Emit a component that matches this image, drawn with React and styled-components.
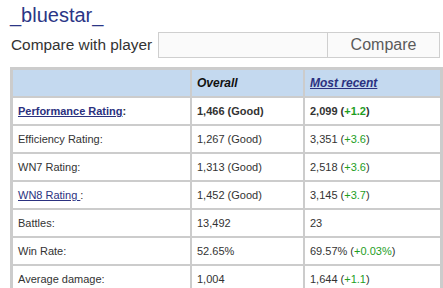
import React from 'react';
import styled, { createGlobalStyle } from 'styled-components';

const GlobalStyle = createGlobalStyle`
  body {
    margin: 0;
    background: #fff;
    font-family: "Liberation Sans", Arial, sans-serif;
    color: #333;
  }
`;

const rows = [
  { label: 'Performance Rating', link: true, bold: true, overall: '1,466 (Good)', recent: '2,099', delta: '+1.2' },
  { label: 'Efficiency Rating:', overall: '1,267 (Good)', recent: '3,351', delta: '+3.6' },
  { label: 'WN7 Rating:', overall: '1,313 (Good)', recent: '2,518', delta: '+3.6' },
  { label: 'WN8 Rating ', link: true, overall: '1,452 (Good)', recent: '3,145', delta: '+3.7' },
  { label: 'Battles:', overall: '13,492', recent: '23' },
  { label: 'Win Rate:', overall: '52.65%', recent: '69.57%', delta: '+0.03%' },
  { label: 'Average damage:', overall: '1,004', recent: '1,644', delta: '+1.1' },
];

const App = () => {
  return (
    <Page>
      <GlobalStyle />
      <Title>_bluestar_</Title>
      <CompareForm>
        <Label>Compare with player</Label>
        <PlayerInput type="text" />
        <CompareButton>Compare</CompareButton>
      </CompareForm>
      <StatsTable>
        <thead>
          <tr>
            <HeadCell $width={177}></HeadCell>
            <HeadCell $width={111}>Overall</HeadCell>
            <HeadCell $width={135}><LinkText href="#">Most recent</LinkText></HeadCell>
          </tr>
        </thead>
        <tbody>
          {rows.map((row) => (
            <tr key={row.label}>
              <Cell $bold={row.bold}>
                {row.link ? <><LinkText href="#">{row.label}</LinkText>:</> : row.label}
              </Cell>
              <Cell $bold={row.bold}>{row.overall}</Cell>
              <Cell $bold={row.bold}>
                {row.recent}
                {row.delta && <> (<Delta>{row.delta}</Delta>)</>}
              </Cell>
            </tr>
          ))}
        </tbody>
      </StatsTable>
    </Page>
  );
};

const Page = styled.div`
  padding: 0 0 0 10px;
  width: 433px;
`;

const Title = styled.h1`
  margin: 4px 0 0 0;
  font-size: 20px;
  line-height: 23px;
  font-weight: normal;
  color: #2b3686;
`;

const CompareForm = styled.div`
  display: flex;
  align-items: center;
  margin-top: 5px;
  height: 26px;
`;

const Label = styled.span`
  font-size: 15.4px;
  color: #333;
  padding-left: 1px;
  width: 147px;
`;

const PlayerInput = styled.input`
  box-sizing: border-box;
  width: 170px;
  height: 26px;
  margin: 0;
  border: 1px solid #cfcfcf;
  background: #fafafa;
  outline: none;
`;

const CompareButton = styled.button`
  box-sizing: border-box;
  width: 112px;
  height: 26px;
  margin: 0;
  border: 1px solid #cfcfcf;
  border-left: none;
  background: #fafafa;
  color: #5a5a5a;
  font-family: "Liberation Sans", Arial, sans-serif;
  font-size: 16px;
`;

const StatsTable = styled.table`
  box-sizing: border-box;
  margin-top: 9px;
  width: 433px;
  border-collapse: separate;
  border-spacing: 2px;
  border: 1px solid #cccccc;
  background: #cccccc;
  table-layout: fixed;
`;

const HeadCell = styled.th`
  box-sizing: border-box;
  width: ${(p) => p.$width}px;
  height: 26px;
  padding: 0 5px;
  background: #c4d9ef;
  text-align: left;
  font-size: 12px;
  font-weight: bold;
  font-style: italic;
  color: #111;
`;

const Cell = styled.td`
  height: 26px;
  padding: 0 4px 0 5px;
  background: #fff;
  font-size: 11px;
  font-weight: ${(p) => (p.$bold ? 'bold' : 'normal')};
  color: #333;
  white-space: nowrap;
`;

const LinkText = styled.a`
  color: #2b3180;
  text-decoration: underline;
`;

const Delta = styled.span`
  color: #1e9e1e;
`;

export default App;
